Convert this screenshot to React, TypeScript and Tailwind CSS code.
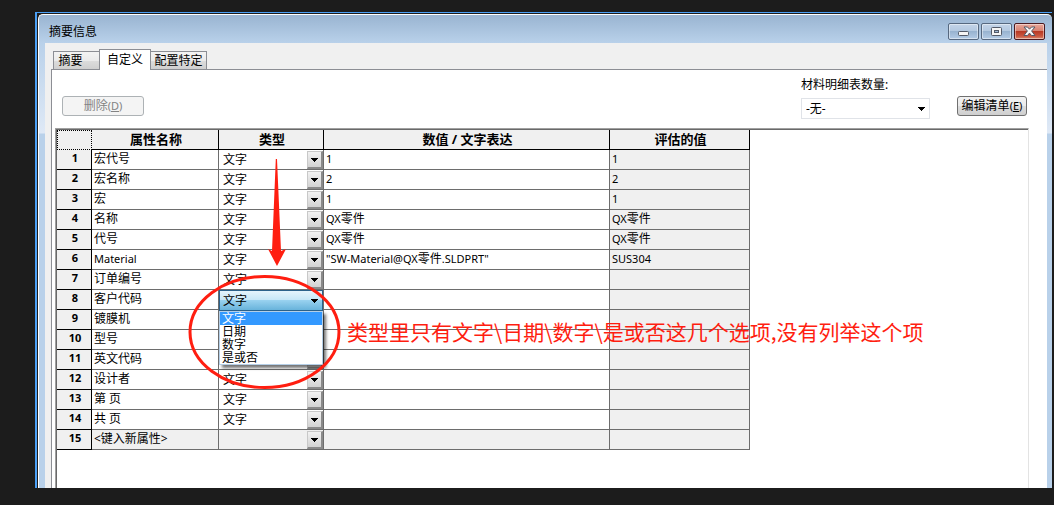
import { useState } from "react";
import clsx from "clsx";

type Property = {
  name: string;
  value?: string;
  evaluated?: string;
};

const TYPES = ["文字", "日期", "数字", "是或否"];
const OPEN_ROW = 7;

const PROPERTIES: Property[] = [
  { name: "宏代号", value: "1", evaluated: "1" },
  { name: "宏名称", value: "2", evaluated: "2" },
  { name: "宏", value: "1", evaluated: "1" },
  { name: "名称", value: "QX零件", evaluated: "QX零件" },
  { name: "代号", value: "QX零件", evaluated: "QX零件" },
  { name: "Material", value: '"SW-Material@QX零件.SLDPRT"', evaluated: "SUS304" },
  { name: "订单编号" },
  { name: "客户代码" },
  { name: "镀膜机" },
  { name: "型号" },
  { name: "英文代码" },
  { name: "设计者" },
  { name: "第 页" },
  { name: "共 页" },
];

const HEADERS = ["属性名称", "类型", "数值 / 文字表达", "评估的值"];

// latin runs are set one size smaller than the chinese ones
function Mixed({ text = "" }: { text?: string }) {
  return text
    .split(/([\x21-\x3b\x3d\x3f-\x7e]+)/)
    .map((part, i) => (i % 2 ? <span key={i} className="text-[11px]">{part}</span> : part));
}

function ArrowDown() {
  return (
    <svg width="7" height="4" viewBox="0 0 7 4" shapeRendering="crispEdges" aria-hidden="true">
      <path d="M0 0h7v1h-1v1h-1v1h-1v1h-1v-1h-1v-1h-1v-1h-1z" fill="#000" />
    </svg>
  );
}

function WindowButtons() {
  const base =
    "flex h-[17px] w-[31px] items-center justify-center rounded-[2px] border shadow-[inset_0_0_0_1px_rgba(255,255,255,0.45)]";
  const plain =
    "border-[#56687f] bg-[linear-gradient(#c3d4e8_0%,#b3c8e0_48%,#98b3d0_50%,#b4cce6_100%)]";

  return (
    <div className="flex gap-0.5 pt-2">
      <button type="button" aria-label="最小化" className={clsx(base, plain)}>
        <svg width="11" height="5" viewBox="0 0 11 5" className="mt-1">
          <rect x="0.5" y="0.5" width="10" height="4" rx="1" fill="#f5f5f5" stroke="#535a68" />
        </svg>
      </button>
      <button type="button" aria-label="最大化" className={clsx(base, plain)}>
        <svg width="11" height="9" viewBox="0 0 11 9">
          <rect x="0.5" y="0.5" width="10" height="8" rx="1" fill="#f5f5f5" stroke="#535a68" />
          <rect x="3.5" y="3.5" width="4" height="2" fill="#9fb8d4" stroke="#535a68" />
        </svg>
      </button>
      <button
        type="button"
        aria-label="关闭"
        className={clsx(
          base,
          "border-[#4c1a20] bg-[linear-gradient(#e8a79b_0%,#d88271_46%,#b93a25_50%,#c9563f_80%,#d98a6f_100%)]",
        )}
      >
        <svg width="13" height="11" viewBox="0 0 13 11">
          <path
            d="M1 1h3.500l2 2.200L8.500 1H12L8.600 5l3.400 4.500H8.500L6.500 7.100l-2 2.400H1L4.400 5z"
            fill="#f7f7f7"
            stroke="#535a68"
            strokeLinejoin="round"
          />
        </svg>
      </button>
    </div>
  );
}

function Tabs() {
  const idle =
    "h-[18px] border-t border-[#8c8e94] bg-[linear-gradient(#f3f3f3_0%,#ebebeb_50%,#dddddd_50%,#cfcfcf_100%)]";

  return (
    <div role="tablist" className="flex h-[26px] items-end pl-2">
      <button type="button" role="tab" aria-selected="false" className={clsx(idle, "w-[46px] border-l pr-3 leading-4")}>
        摘要
      </button>
      <button
        type="button"
        role="tab"
        aria-selected="true"
        className="z-10 -mb-px h-[21px] w-[52px] border border-b-0 border-[#8c8e94] bg-white leading-4"
      >
        自定义
      </button>
      <button type="button" role="tab" aria-selected="false" className={clsx(idle, "w-14 border-r leading-4")}>
        配置特定
      </button>
    </div>
  );
}

function TypeCell({ row, open, blank }: { row: number; open: boolean; blank: boolean }) {
  const [type, setType] = useState(blank ? "" : TYPES[0]);

  return (
    <div
      className={clsx(
        "relative grid items-center",
        open
          ? "-mb-0.5 h-[21px] border border-[#2c628b] bg-[linear-gradient(#e5f4fc_0%,#c4e5f6_50%,#98d1ef_50%,#68b3db_100%)]"
          : "h-[19px]",
      )}
    >
      <select
        aria-label={`类型 ${row}`}
        value={type}
        onChange={(e) => setType(e.target.value)}
        className={clsx(
          "col-start-1 row-start-1 h-full w-full appearance-none bg-transparent leading-4 outline-none",
          open ? "pl-[3px]" : "pl-1",
        )}
      >
        {blank && <option value="" />}
        {TYPES.map((t) => (
          <option key={t}>{t}</option>
        ))}
      </select>
      <span
        className={clsx(
          "pointer-events-none col-start-1 row-start-1 flex items-center justify-center justify-self-end",
          open
            ? "h-4 w-4"
            : "h-[18px] w-4 border-t border-r-2 border-b-2 border-l border-t-[#c8c8c8] border-r-[#8a8a8a] border-b-[#8a8a8a] border-l-[#c8c8c8] bg-[linear-gradient(#f2f2f2,#d2d2d2)] pt-0.5",
        )}
      >
        <ArrowDown />
      </span>
      {open && (
        <ul
          role="listbox"
          className="absolute top-full -left-px z-10 mt-px w-[104px] border border-[#b5cfe7] bg-white shadow-[3px_3px_3px_rgba(0,0,0,0.55)]"
        >
          {TYPES.map((t) => (
            <li
              key={t}
              role="option"
              aria-selected={t === type}
              className={clsx("h-[13px] pl-0.5 leading-[13px]", t === type && "bg-[#3399ff] text-white")}
            >
              {t}
            </li>
          ))}
        </ul>
      )}
    </div>
  );
}

function PropertyTable() {
  const rows: Property[] = [...PROPERTIES, { name: "<键入新属性>" }];

  return (
    <table className="w-[693px] table-fixed border-separate border-spacing-0">
      <colgroup>
        <col className="w-[35px]" />
        <col className="w-[127px]" />
        <col className="w-[105px]" />
        <col className="w-[286px]" />
        <col className="w-[140px]" />
      </colgroup>
      <thead>
        <tr className="h-5 bg-[#f0f0f0]">
          <td className="border border-dotted border-black p-0" />
          {HEADERS.map((h) => (
            <th key={h} scope="col" className="border-r border-b border-black p-0 pl-0.5 text-[13px] leading-[19px] font-bold">
              {h}
            </th>
          ))}
        </tr>
      </thead>
      <tbody>
        {rows.map((row, i) => {
          const blank = i === PROPERTIES.length;
          const cell = "h-5 border-r border-b border-[#6d6d6d] p-0 align-top leading-[18px]";
          return (
            <tr key={i} className={blank ? "bg-[#f0f0f0]" : "bg-white"}>
              <th
                scope="row"
                className="h-5 border-r border-b border-black bg-[#f0f0f0] p-0 pl-0.5 align-top text-[11px] leading-4 font-bold"
              >
                {i + 1}
              </th>
              <td className={clsx(cell, "pl-0.5")}>
                <Mixed text={row.name} />
              </td>
              <td className={cell}>
                <TypeCell row={i + 1} open={i === OPEN_ROW} blank={blank} />
              </td>
              <td className={clsx(cell, "pl-0.5")}>
                <Mixed text={row.value} />
              </td>
              <td className={clsx(cell, "bg-[#f0f0f0] pl-0.5")}>
                <Mixed text={row.evaluated} />
              </td>
            </tr>
          );
        })}
      </tbody>
    </table>
  );
}

/* hand-drawn red notes over the dialog */
function Annotations() {
  return (
    <>
      <svg
        className="pointer-events-none absolute top-[150px] left-[180px] z-20"
        width="170"
        height="245"
        viewBox="0 0 170 245"
        fill="none"
        aria-hidden="true"
      >
        <path d="M95.800 9h1.200l4 92 5-2-9 17L88 99l4 2z" fill="#ff1e10" />
        <ellipse cx="84.500" cy="182" rx="74.500" ry="55.500" stroke="#ff1e10" strokeWidth="3" />
      </svg>
      <p className="pointer-events-none absolute top-[317px] left-[347px] z-20 font-['Noto_Sans_CJK_SC',sans-serif] text-[21px] leading-7 whitespace-nowrap text-[#ff1e10]">
        类型里只有文字\日期\数字\是或否这几个选项,没有列举这个项
      </p>
    </>
  );
}

export default function App() {
  return (
    <main className="relative flex h-screen flex-col overflow-hidden bg-[#1c1c1c] pt-3 pr-0.5 pb-[17px] pl-[35px] font-['Noto_Sans','Noto_Sans_CJK_SC',sans-serif] text-xs text-black">
      <div className="flex min-h-0 flex-1 border-t border-l-2 border-[#4a9ff5] bg-[#1c1c1c]">
        <section className="mt-px ml-px flex min-w-0 flex-1 flex-col rounded-t-[5px] border-t border-l border-white bg-[linear-gradient(#99b4d1_0px,#b9d1ea_28px,#dfe9f6_118px,#b9d1ea_119px)] pr-[5px] pl-1.5">
          <header className="flex h-7 shrink-0 justify-between pr-0.5 pl-1">
            <h1 className="leading-[34px]">摘要信息</h1>
            <WindowButtons />
          </header>

          <div className="flex min-h-0 flex-1 flex-col bg-[#f0f0f0]">
            <Tabs />
            <div className="ml-1.5 flex min-h-0 flex-1 flex-col border-t border-l border-[#8c8e94] bg-white">
              <div className="flex h-[58px] shrink-0 items-end justify-between pr-5 pb-3 pl-2.5">
                <button
                  type="button"
                  disabled
                  className="h-5 w-[82px] rounded-[3px] border border-[#adb2b5] bg-[#f4f4f4] leading-4 text-[#838383]"
                >
                  删除<span className="text-[11px]">(<u>D</u>)</span>
                </button>
                <div className="flex items-end gap-[27px]">
                  <div className="-mb-[3px] flex flex-col gap-[5px]">
                    <label htmlFor="bom-qty" className="leading-4">
                      材料明细表数量:
                    </label>
                    <div className="grid h-[21px] w-[129px] items-center border border-[#e0e3e8] bg-white">
                      <select
                        id="bom-qty"
                        className="col-start-1 row-start-1 h-full w-full appearance-none bg-transparent pl-1 leading-4 outline-none"
                      >
                        <option>-无-</option>
                      </select>
                      <span className="pointer-events-none col-start-1 row-start-1 mr-1 justify-self-end">
                        <ArrowDown />
                      </span>
                    </div>
                  </div>
                  <button
                    type="button"
                    className="h-5 w-[70px] rounded-[3px] border border-[#707070] bg-[linear-gradient(#f2f2f2_0%,#ebebeb_50%,#dddddd_50%,#cfcfcf_100%)] leading-4 whitespace-nowrap"
                  >
                    编辑清单<span className="text-[11px]">(<u>E</u>)</span>
                  </button>
                </div>
              </div>

              <div className="mr-[18px] ml-[3px] min-h-0 flex-1 border-t border-r border-l border-t-[#a0a0a0] border-r-[#e3e3e3] border-l-[#a0a0a0]">
                <div className="h-full border-t border-l border-[#696969]">
                  <PropertyTable />
                </div>
              </div>
            </div>
          </div>
        </section>
      </div>
      <Annotations />
    </main>
  );
}
